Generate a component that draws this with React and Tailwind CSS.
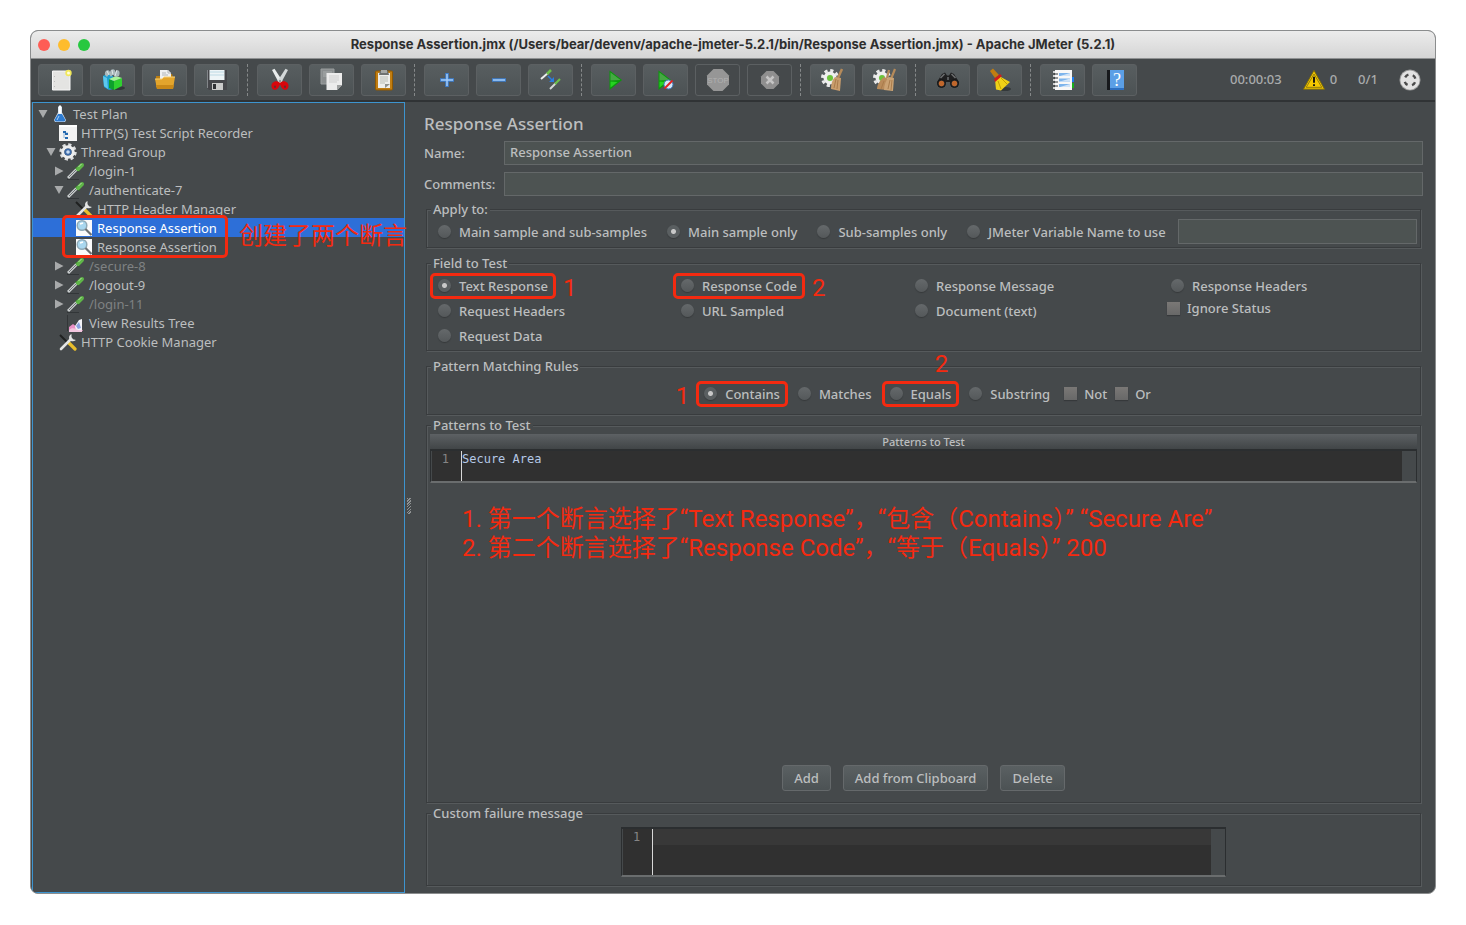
// App.jsx - JMeter main window with the Response Assertion editor open
import { useState } from 'react';
import clsx from 'clsx';

/* ---------- Toolbar icons ---------- */

function Icon({ size = 24, children }) {
  return (
    <svg width={size} height={size} viewBox="0 0 24 24" fill="none" aria-hidden="true" className="shrink-0">
      {children}
    </svg>
  );
}

const NewIcon = () => (
  <Icon>
    <path d="M3.500 3h17.500v19h-17.500z" fill="#e4e4e2" stroke="#f7f7f7" />
    <path d="M5.500 8v1M5.500 13v1M5.500 18v1" stroke="#bdbdbd" />
    <circle cx="19.500" cy="5" r="3.200" fill="#f1e85a" />
    <circle cx="19.500" cy="5" r="1.500" fill="#fffde0" />
  </Icon>
);

const TemplatesIcon = () => (
  <Icon>
    <ellipse cx="17" cy="20" rx="7" ry="2" fill="#33383a" />
    <path d="M2 8l5-3 5 3v13l-4 1-5-3z" fill="#1d9fd0" />
    <path d="M2 8l4 2 1 11-4-3z" fill="#5cc8ee" />
    <path d="M8 11l5 2v9l-5-2z" fill="#0ea02c" />
    <path d="M13 13l8-3v8l-8 4z" fill="#2fd030" />
    <path d="M8 11l7-3 6 2-8 3z" fill="#a6f59a" />
    <path d="M4 7c-1-5 4-6 5-3 1-4 6-3 5 0 3-3 6-1 4 4l-4 1-2-3-2 3-2-3-2 3z" fill="#a9b7ba" />
    <path d="M6 3l2 4M11 2l1 5M16 2l-2 6" stroke="#dfe7e8" />
  </Icon>
);

const OpenIcon = () => (
  <Icon>
    <path d="M3 8h6l1-2h9l1 3v10H3z" fill="#b97d12" />
    <path d="M7 2h8l3 3v8H7z" fill="#eef0f0" />
    <path d="M15 2v3h3M9 5h4M9 7h6" stroke="#b3b6b7" />
    <path d="M2 11h7l2-2h11l-2 12H4z" fill="#e3a52c" />
    <path d="M2 11h7l2-2h11" stroke="#f8d277" />
    <path d="M4 21h16l1-4H3z" fill="#c98918" />
  </Icon>
);

const SaveIcon = () => (
  <Icon>
    <path d="M2 2h20v20H4l-2-2z" fill="#45464a" />
    <path d="M4.500 2h15v10h-15z" fill="#eef5f7" />
    <path d="M5 4h14M5 7h14" stroke="#bcd9e4" />
    <path d="M7 15h11v7H7z" fill="#c9c9c9" />
    <path d="M8 16h3v5H8z" fill="#303134" />
    <path d="M2.500 2v18" stroke="#83868a" />
  </Icon>
);

const CutIcon = () => (
  <Icon>
    <path d="M4 2l2.500-1.200L14.500 13l-3 3z" fill="#e9ecec" />
    <path d="M20 2l-2.500-1.200L9.500 13l3 3z" fill="#d3d8d9" />
    <circle cx="12" cy="13" r="1" fill="#7d8283" />
    <path d="M11 14c-4-2-8 1-7.500 4.500.5 4 5 4.500 7 1L12 16.500l1.500 3c2 3.500 6.500 3 7-1 .5-3.500-3.500-6.500-7.500-4.500l-1 1z" fill="#d8060c" />
    <ellipse cx="7" cy="18.800" rx="1.100" ry="1.300" fill="#6a2a2c" />
    <ellipse cx="17" cy="18.800" rx="1.100" ry="1.300" fill="#6a2a2c" />
  </Icon>
);

const CopyIcon = () => (
  <Icon>
    <path d="M1 1h13v15H1z" fill="#8a8e8f" stroke="#9a9e9f" />
    <path d="M3 4h9M3 6h9M3 8h9" stroke="#a9adad" />
    <path d="M6.500 5h15.500v12l-5 5H6.500z" fill="#ececec" />
    <path d="M9 8h10M9 10h10M9 12h10M9 14h8" stroke="#cfcfcf" />
    <path d="M17 22v-5h5z" fill="#9fa1a1" />
  </Icon>
);

const PasteIcon = () => (
  <Icon>
    <rect x="3.500" y="3" width="17" height="19" rx="1" fill="#c17d11" stroke="#8f5902" />
    <path d="M6 5h12v15H6z" fill="#eeeeec" />
    <path d="M8 3h8l1 4H7z" fill="#6f7271" />
    <path d="M9 2h6v3H9z" fill="#a6a8a6" />
    <path d="M8 9h8M8 11h8M8 13h8M8 15h5" stroke="#babdb6" />
    <path d="M13 20v-4h5z" fill="#8f918e" />
  </Icon>
);

const PlusIcon = () => (
  <Icon>
    <path d="M12 5v14M5 12h14" stroke="#3d7fd0" strokeWidth="3.500" />
    <path d="M12 6v12M6 12h12" stroke="#a4cdf8" strokeWidth="1.500" />
  </Icon>
);

const MinusIcon = () => (
  <Icon>
    <path d="M5 12h14" stroke="#3d7fd0" strokeWidth="3.500" />
    <path d="M6 12h12" stroke="#a4cdf8" strokeWidth="1.500" />
  </Icon>
);

const ToggleIcon = () => (
  <Icon>
    <path d="M2 11l7-6" stroke="#eceeee" strokeWidth="2" />
    <path d="M8 6l4-4" stroke="#6cc04a" strokeWidth="2.500" />
    <path d="M11 21l6-6" stroke="#d5d8d8" strokeWidth="2" />
    <path d="M16 16l5-5" stroke="#6cc04a" strokeWidth="2.200" />
    <path d="M9 8l4 4" stroke="#2a7de0" strokeWidth="1.500" />
    <path d="M15 9v5h-5z" fill="#2a7de0" />
  </Icon>
);

const StartIcon = () => (
  <Icon>
    <path d="M7.500 2.500v19.500L20 12z" fill="#0a9a0a" />
    <path d="M8.500 4.500v8l10-.500z" fill="#46a844" />
    <path d="M8.500 19.500v-6l7 .500z" fill="#25d321" />
  </Icon>
);

const StartNoPauseIcon = () => (
  <Icon>
    <path d="M4.500 2.500v19.500L17 12z" fill="#0a9a0a" />
    <path d="M5.500 4.500v8l10-.500z" fill="#46a844" />
    <path d="M5.500 19.500v-6l7 .500z" fill="#25d321" />
    <circle cx="14.500" cy="16.500" r="4.500" fill="#d5e6f7" stroke="#3c78bd" />
    <path d="M10.500 20.500l8-8" stroke="#e02222" strokeWidth="2" />
  </Icon>
);

const StopIcon = () => (
  <Icon>
    <path d="M7.500 1h9L23 7.500v9L16.500 23h-9L1 16.500v-9z" fill="#969696" />
    <text x="12" y="15" textAnchor="middle" fill="#b0b0b0" fontSize="8" fontFamily="Liberation Sans">STOP</text>
  </Icon>
);

const ShutdownIcon = () => (
  <Icon>
    <path d="M8.500 3h7L21 8.500v7L15.500 21h-7L3 15.500v-7z" fill="#8f8f8f" />
    <path d="M8.500 8.500l7 7M15.500 8.500l-7 7" stroke="#c4c4c4" strokeWidth="2.500" />
  </Icon>
);

const Gear = () => (
  <>
    <circle cx="9" cy="10" r="7.500" stroke="#e9e9e9" strokeWidth="3" strokeDasharray="3.200 2.690" />
    <circle cx="9" cy="10" r="5" fill="#e4e4e4" stroke="#efefef" strokeWidth="3" />
    <circle cx="9" cy="10" r="3" fill="#6cc33a" />
  </>
);

const ClearIcon = () => (
  <Icon>
    <Gear />
    <path d="M21 1l-4 9" stroke="#b58a5a" strokeWidth="2.500" />
    <path d="M14 9l6 1-1 13-9-2c0-5 1-9 4-12z" fill="#c99d6c" />
    <path d="M15 11l-2 9M17 12l-1 9" stroke="#a97c4c" />
  </Icon>
);

const ClearAllIcon = () => (
  <Icon>
    <Gear />
    <path d="M16 2l-2 8M22 1l-4 10" stroke="#b58a5a" strokeWidth="2.200" />
    <path d="M11 9l5 2-2 11-10-1c0-4 3-9 7-12z" fill="#b98b5a" />
    <path d="M16 9l5 1-1 13-9-1c0-5 2-10 5-13z" fill="#cba374" />
    <path d="M11 13l-3 8M17 12l-2 9M19 12l-1 10" stroke="#a97c4c" />
  </Icon>
);

const SearchIcon = () => (
  <Icon>
    <path d="M6 6l3-1.500 2 3h2l2-3 3 1.500 5 8-2 5h-4l-3-5h-4l-3 5H3l-2-5z" fill="#1f1f20" />
    <path d="M4.500 10l4-4M19.500 10l-4-4M12 9v3" stroke="#6d6f70" strokeWidth="1.500" />
    <circle cx="5.500" cy="15.500" r="4" fill="#2c2c2c" stroke="#151515" />
    <circle cx="18.500" cy="15.500" r="4" fill="#2c2c2c" stroke="#151515" />
    <circle cx="5.500" cy="15.500" r="2.700" fill="#c0672c" />
    <circle cx="18.500" cy="15.500" r="2.700" fill="#c0672c" />
  </Icon>
);

const SearchResetIcon = () => (
  <Icon>
    <ellipse cx="17" cy="21" rx="6" ry="2" fill="#33383a" />
    <path d="M2 3l3-2.500L11 7l-4 3z" fill="#c17d11" />
    <path d="M11 8l11 6-9 8.500-5-1-1-10z" fill="#efd117" />
    <path d="M6 11l6-5 2 2-7 6z" fill="#cf1d1d" />
    <path d="M10 13l3 8M13 10l6 6" stroke="#c4a000" />
  </Icon>
);

const FunctionHelperIcon = () => (
  <Icon>
    <path d="M20 9h3v5h-3z" fill="#1b7cf0" />
    <path d="M20 15h3v5h-3z" fill="#16b01b" />
    <path d="M4 2h17v20H4z" fill="#f7f7f7" />
    <path d="M8 5h11v3H8zM8 10.500h11v3H8zM8 16h11v3H8z" fill="#7db4ec" />
    <path d="M9 8l10-3v3zM9 13.500l10-3v3zM9 19l10-3v3z" fill="#cfe3f8" />
    <path d="M2 4h5M2 8h5M2 12h5M2 16h5M2 20h5" stroke="#fafafa" strokeWidth="1.500" />
    <path d="M3 6h4M3 10h4M3 14h4M3 18h4" stroke="#333638" />
  </Icon>
);

const HelpIcon = () => (
  <Icon>
    <path d="M4 2h3v20H4z" fill="#17191c" />
    <path d="M7 2h14v20H7z" fill="#5b9fe6" />
    <path d="M7 20h14v2H7z" fill="#2d6fc0" />
    <text x="14" y="18" textAnchor="middle" fill="#ffffff" fontSize="18" fontFamily="Liberation Serif">?</text>
  </Icon>
);

const WarningIcon = () => (
  <Icon size={22}>
    <path d="M12 1.500L23.500 22H.500z" fill="#f5c800" stroke="#7c6a08" />
    <path d="M12 5.500L20.500 20h-17z" stroke="#8a7510" strokeWidth="1" />
    <path d="M12 8.500v6.500M12 16.500v2" stroke="#1c1a10" strokeWidth="2.200" />
  </Icon>
);

const RemoteIcon = () => (
  <Icon size={22}>
    <circle cx="12" cy="12" r="11.500" fill="#9c9c9c" />
    <circle cx="12" cy="12" r="10.500" fill="#e2e2e2" />
    <circle cx="12" cy="12" r="6" stroke="#4b4b4b" strokeWidth="2.600" strokeDasharray="4.400 5.025" strokeDashoffset="-2.500" />
  </Icon>
);

/* ---------- Tree icons ---------- */

function TreeSvg({ children }) {
  return (
    <svg width="18" height="18" viewBox="0 0 18 18" fill="none" aria-hidden="true" className="shrink-0">
      {children}
    </svg>
  );
}

const FlaskIcon = () => (
  <TreeSvg>
    <path d="M7 1.500h4v6l4 7.500-1 2H4l-1-2 4-7.500z" fill="#dfe9f2" />
    <path d="M7 9h4l3.500 6-1 1.500h-9L3.500 15z" fill="#2e7bd0" />
    <path d="M9 .500v8" stroke="#ffffff" strokeWidth="2" />
    <path d="M8 11l-2 4" stroke="#a8d2f7" />
  </TreeSvg>
);

const RecorderIcon = () => (
  <TreeSvg>
    <path d="M0 1h18v16H0z" fill="#f3f3f3" />
    <path d="M0 1h18v2H0z" fill="#ffffff" />
    <path d="M5 8v6M6 9h3M6 14h3" stroke="#8ab4dc" />
    <path d="M4 7h3v2H4zM6 9h3v2H6zM6 13h3v2H6z" fill="#2469b0" />
  </TreeSvg>
);

const GearIcon = () => (
  <TreeSvg>
    <circle cx="9" cy="9" r="7.200" stroke="#dcdedf" strokeWidth="3" strokeDasharray="3.100 2.550" />
    <circle cx="9" cy="9" r="5.200" stroke="#eceded" strokeWidth="3.200" />
    <circle cx="9" cy="9" r="3.600" fill="#3c6aa8" />
    <circle cx="9" cy="9" r="1.800" fill="#c7dcf3" />
  </TreeSvg>
);

const DropperIcon = () => (
  <TreeSvg>
    <path d="M0 17.500h12" stroke="#323638" />
    <path d="M1 16l9-9" stroke="#c9cdce" strokeWidth="3" />
    <path d="M2 15l8-8" stroke="#6d7274" />
    <path d="M8.500 5.500l4 4" stroke="#2f6b25" strokeWidth="1.500" />
    <path d="M11 7l4-4" stroke="#5fb648" strokeWidth="4" strokeLinecap="round" />
    <path d="M11.500 5l3-3" stroke="#b6e5a4" />
  </TreeSvg>
);

const ToolsIcon = () => (
  <TreeSvg>
    <path d="M1 2l9 9" stroke="#1f2020" strokeWidth="2" />
    <path d="M10 10l6 6" stroke="#e8be2c" strokeWidth="3.200" strokeLinecap="round" />
    <path d="M2 16L12 6" stroke="#e3e4e4" strokeWidth="2.600" strokeLinecap="round" />
    <path d="M12.500 1c-2.500 1-3 3.500-2 5.500s4 2.500 6.500.500l-3-.800-1.500-2z" fill="#e3e4e4" />
  </TreeSvg>
);

const AssertionIcon = () => (
  <TreeSvg>
    <path d="M1 1h16v16H1z" fill="#fbfbfb" />
    <circle cx="7" cy="6.500" r="4.800" fill="#a9d7ef" stroke="#8fa9b6" strokeWidth="1.500" />
    <path d="M5 5l3-1" stroke="#ffffff" strokeWidth="1.500" />
    <path d="M10.500 10l6 6" stroke="#6b7073" strokeWidth="2.200" />
  </TreeSvg>
);

const ResultsIcon = () => (
  <TreeSvg>
    <path d="M.500 1v16" stroke="#333638" />
    <path d="M2 17v-4l4-3 4 3 4 1 2 3z" fill="#e98fc4" />
    <path d="M8 12l4-6 3-1v12H9z" fill="#f4f4f8" />
    <path d="M9 12l3-4 2 6-3 1z" fill="#8aa0dd" />
    <path d="M2 16c5-5 8 2 13 0v2H2z" fill="#f3c6df" />
  </TreeSvg>
);

/* ---------- Data ---------- */

const toolbarGroups = [
  [
    { label: 'New', icon: NewIcon },
    { label: 'Templates', icon: TemplatesIcon },
    { label: 'Open', icon: OpenIcon },
    { label: 'Save', icon: SaveIcon },
  ],
  [
    { label: 'Cut', icon: CutIcon },
    { label: 'Copy', icon: CopyIcon },
    { label: 'Paste', icon: PasteIcon },
  ],
  [
    { label: 'Expand All', icon: PlusIcon },
    { label: 'Collapse All', icon: MinusIcon },
    { label: 'Toggle', icon: ToggleIcon },
  ],
  [
    { label: 'Start', icon: StartIcon },
    { label: 'Start no pauses', icon: StartNoPauseIcon },
    { label: 'Stop', icon: StopIcon, disabled: true },
    { label: 'Shutdown', icon: ShutdownIcon, disabled: true },
  ],
  [
    { label: 'Clear', icon: ClearIcon },
    { label: 'Clear All', icon: ClearAllIcon },
  ],
  [
    { label: 'Search', icon: SearchIcon },
    { label: 'Reset Search', icon: SearchResetIcon },
  ],
  [
    { label: 'Function Helper', icon: FunctionHelperIcon },
    { label: 'Help', icon: HelpIcon },
  ],
];

const treeNodes = [
  { label: 'Test Plan', level: 0, icon: FlaskIcon, arrow: 'open' },
  { label: 'HTTP(S) Test Script Recorder', level: 1, icon: RecorderIcon },
  { label: 'Thread Group', level: 1, icon: GearIcon, arrow: 'open' },
  { label: '/login-1', level: 2, icon: DropperIcon, arrow: 'closed' },
  { label: '/authenticate-7', level: 2, icon: DropperIcon, arrow: 'open' },
  { label: 'HTTP Header Manager', level: 3, icon: ToolsIcon },
  { label: 'Response Assertion', level: 3, icon: AssertionIcon, selected: true, note: '创建了两个断言' },
  { label: 'Response Assertion', level: 3, icon: AssertionIcon },
  { label: '/secure-8', level: 2, icon: DropperIcon, arrow: 'closed', disabled: true },
  { label: '/logout-9', level: 2, icon: DropperIcon, arrow: 'closed' },
  { label: '/login-11', level: 2, icon: DropperIcon, arrow: 'closed', disabled: true },
  { label: 'View Results Tree', level: 2, icon: ResultsIcon },
  { label: 'HTTP Cookie Manager', level: 1, icon: ToolsIcon },
];

const levelPadding = ['pl-[5px]', 'pl-[13px]', 'pl-[21px]', 'pl-[29px]'];

const noteFont = "font-['Roboto','Noto_Sans_CJK_SC',sans-serif] text-2xl font-normal text-[#f42a10]";

/* ---------- Shared pieces ---------- */

// Etched border: dark line with a lighter one on its lower right side
function Group({ title, className, children }) {
  return (
    <fieldset
      className={clsx(
        'mx-[2px] min-w-0 border border-[#393c3e] px-px pb-px shadow-[1px_1px_#565a5c,inset_1px_1px_#565a5c]',
        className
      )}
    >
      <legend className="ml-[3px] bg-[#45494b] px-[2px] leading-4">{title}</legend>
      {children}
    </fieldset>
  );
}

// Red frame with an optional number, drawn over the control it belongs to
function Mark({ number, className }) {
  return (
    <span className="pointer-events-none absolute -inset-x-2 -inset-y-[5px] rounded-[5px] border-3 border-[#f42a10]">
      {number && <span className={clsx('absolute leading-6', noteFont, className)}>{number}</span>}
    </span>
  );
}

function Radio({ name, label, checked, onChange, mark }) {
  return (
    <label className="relative flex w-fit items-center gap-2 leading-4 whitespace-nowrap">
      <input
        type="radio"
        name={name}
        checked={checked}
        onChange={onChange}
        className="size-[13px] shrink-0 appearance-none rounded-full bg-linear-to-b from-[#65696b] to-[#54585a] shadow-[0_1px_1px_#36393b] checked:bg-[radial-gradient(circle,#c8c8c8_0,#c8c8c8_2px,#5a5f61_3px)]"
      />
      {label}
      {mark}
    </label>
  );
}

function Checkbox({ label }) {
  return (
    <label className="flex w-fit items-center gap-[7px] leading-4 whitespace-nowrap">
      <input
        type="checkbox"
        className="size-[13px] shrink-0 appearance-none bg-linear-to-b from-[#7a7876] to-[#686868] shadow-[0_1px_1px_#36393b] checked:bg-[#4a88c7]"
      />
      {label}
    </label>
  );
}

function TextField({ className, ...props }) {
  return (
    <input
      type="text"
      className={clsx('min-w-0 flex-1 border border-[#646869] bg-[#4d5352] px-[5px] outline-none', className)}
      {...props}
    />
  );
}

function CodeEditor({ label, defaultValue, className, lineClass }) {
  return (
    <div className={clsx("flex border border-t-2 border-b-2 border-[#2b2e30] border-b-[#6a6d6e] bg-[#303030] font-['DejaVu_Sans_Mono',monospace] text-xs leading-4 font-normal", className)}>
      <div className="w-[30px] shrink-0 border-l border-[#45494b] pr-3 text-right text-[#858585]">1</div>
      <textarea
        aria-label={label}
        defaultValue={defaultValue}
        className={clsx('block min-w-0 flex-1 resize-none overflow-hidden border-l border-[#d8d8d8] text-[#b5c8e6] outline-none', lineClass)}
      />
      <div className="w-[14px] shrink-0 bg-[#45494b]" />
    </div>
  );
}

function PushButton({ children }) {
  return (
    <button
      type="button"
      className="h-[26px] rounded-[3px] border border-[#65696b] bg-linear-to-b from-[#5a6062] to-[#4c5254] px-[11px] leading-4"
    >
      {children}
    </button>
  );
}

/* ---------- Window parts ---------- */

function TitleBar() {
  return (
    <header className="relative flex h-7 items-center justify-center border-b border-[#8f9192] bg-linear-to-b from-[#ececec] to-[#d5d5d5]">
      <div className="absolute left-[7px] flex gap-2">
        <span className="size-3 rounded-full bg-[#fe5d55]" />
        <span className="size-3 rounded-full bg-[#febc2d]" />
        <span className="size-3 rounded-full bg-[#27c840]" />
      </div>
      <h1 className="font-['Inter',sans-serif] text-[13px] font-bold whitespace-nowrap text-[#2e2e2e]">
        Response Assertion.jmx (/Users/bear/devenv/apache-jmeter-5.2.1/bin/Response Assertion.jmx) - Apache JMeter (5.2.1)
      </h1>
    </header>
  );
}

function Toolbar() {
  return (
    <div className="flex h-[43px] items-center border-b-2 border-[#303335] pr-[14px] pl-[7px]">
      {toolbarGroups.map((group, index) => (
        <div key={index} className="flex items-center">
          {index > 0 && <span className="mx-2 h-8 w-[2px] border-l border-dashed border-[#858889]" />}
          <div className="flex gap-[7px]">
            {group.map(({ label, icon: ToolIcon, disabled }) => (
              <button
                key={label}
                type="button"
                aria-label={label}
                disabled={disabled}
                className="flex h-8 w-[45px] items-center justify-center rounded-[3px] border border-[#5c6062] bg-linear-to-b from-[#585e60] to-[#4c5254] disabled:bg-none"
              >
                <ToolIcon />
              </button>
            ))}
          </div>
        </div>
      ))}
      <div className="ml-auto flex items-center gap-[21px] text-[#a9abac]">
        <span>00:00:03</span>
        <span className="flex items-center gap-[5px]">
          <WarningIcon />0
        </span>
        <span>0/1</span>
        <RemoteIcon />
      </div>
    </div>
  );
}

function Arrow({ state }) {
  return (
    <svg width="10" height="10" viewBox="0 0 10 10" aria-hidden="true" className="mr-[3px] shrink-0">
      {state === 'open' && <path d="M.500 1h9L5 9z" fill="#a8aaab" />}
      {state === 'closed' && <path d="M1 .500v9L9.500 5z" fill="#a8aaab" />}
    </svg>
  );
}

function Tree() {
  return (
    <aside className="relative w-[373px] shrink-0 border border-[#3d94cf] pt-px font-normal">
      <ul>
        {treeNodes.map(({ label, level, icon: NodeIcon, arrow, selected, disabled, note }, index) => (
          <li
            key={index}
            className={clsx(
              'relative flex h-[19px] items-center whitespace-nowrap',
              levelPadding[level],
              selected && 'bg-[#2d6fd8] text-white',
              disabled && 'text-[#7f8283]'
            )}
          >
            <Arrow state={arrow} />
            <NodeIcon />
            <span className="ml-1 leading-4">{label}</span>
            {note && (
              <>
                <span className="absolute -top-[3px] left-[29px] z-10 h-[43px] w-[166px] rounded-[5px] border-3 border-[#f42a10]" />
                <span className={clsx('absolute top-[6px] left-[206px] z-10 leading-6', noteFont)}>{note}</span>
              </>
            )}
          </li>
        ))}
      </ul>
    </aside>
  );
}

function AssertionPanel() {
  const [scope, setScope] = useState('Main sample only');
  const [field, setField] = useState('Text Response');
  const [rule, setRule] = useState('Contains');

  const radio = (name, label, value, setValue, mark) => (
    <Radio name={name} label={label} checked={value === label} onChange={() => setValue(label)} mark={mark} />
  );

  return (
    <main className="flex min-w-0 flex-1 flex-col pt-[10px] pr-3 pb-[7px] pl-[11px]">
      <h2 className="text-[17px] leading-6">Response Assertion</h2>
      <div className="mt-[5px] flex h-6">
        <label htmlFor="name" className="w-20 leading-6">Name:</label>
        <TextField id="name" defaultValue="Response Assertion" />
      </div>
      <div className="mt-[7px] flex h-6">
        <label htmlFor="comments" className="w-20 leading-6">Comments:</label>
        <TextField id="comments" />
      </div>

      <Group title="Apply to:" className="mt-[5px]">
        <div className="flex h-[29px] items-center gap-5 pr-[2px] pl-[10px]">
          {radio('scope', 'Main sample and sub-samples', scope, setScope)}
          {radio('scope', 'Main sample only', scope, setScope)}
          {radio('scope', 'Sub-samples only', scope, setScope)}
          <div className="flex flex-1 items-center gap-3">
            {radio('scope', 'JMeter Variable Name to use', scope, setScope)}
            <TextField aria-label="JMeter Variable Name" className="h-[25px]" />
          </div>
        </div>
      </Group>

      <Group title="Field to Test" className="mt-[7px]">
        <div className="grid auto-rows-[25px] grid-cols-[243fr_234fr_256fr_248fr] items-center pt-[2px] pb-px pl-[10px]">
          {radio('field', 'Text Response', field, setField, <Mark number="1" className="top-0 left-full ml-[10px]" />)}
          {radio('field', 'Response Code', field, setField, <Mark number="2" className="top-0 left-full ml-[10px]" />)}
          {radio('field', 'Response Message', field, setField)}
          {radio('field', 'Response Headers', field, setField)}
          {radio('field', 'Request Headers', field, setField)}
          {radio('field', 'URL Sampled', field, setField)}
          {radio('field', 'Document (text)', field, setField)}
          <div className="-ml-1 flex h-5 items-center self-start">
            <Checkbox label="Ignore Status" />
          </div>
          {radio('field', 'Request Data', field, setField)}
        </div>
      </Group>

      <Group title="Pattern Matching Rules" className="mt-[7px]">
        <div className="flex h-[39px] items-center justify-center gap-[14px] pl-2">
          <div className="flex gap-[18px]">
            {radio('rule', 'Contains', rule, setRule, <Mark number="1" className="top-0 right-full mr-[10px]" />)}
            {radio('rule', 'Matches', rule, setRule)}
            {radio('rule', 'Equals', rule, setRule, <Mark number="2" className="-top-8 right-0 mr-2" />)}
            {radio('rule', 'Substring', rule, setRule)}
          </div>
          <div className="flex gap-2">
            <Checkbox label="Not" />
            <Checkbox label="Or" />
          </div>
        </div>
      </Group>

      <Group title="Patterns to Test" className="relative mt-[2px] flex flex-1 flex-col">
        <div className="flex h-full flex-col px-[2px] pt-px pb-[10px]">
          <table className="w-full border-collapse">
            <thead>
              <tr>
                <th className="h-[15px] bg-linear-to-b from-[#5d6164] to-[#414547] p-0 text-[11px] leading-[15px] font-medium">
                  Patterns to Test
                </th>
              </tr>
            </thead>
            <tbody>
              <tr>
                <td className="p-0">
                  <CodeEditor label="Pattern 1" defaultValue="Secure Area" className="h-[34px]" />
                </td>
              </tr>
            </tbody>
          </table>
          <div className={clsx('pointer-events-none mt-[22px] ml-8 leading-[29px] whitespace-nowrap', noteFont)}>
            <p>1. 第一个断言选择了“Text Response”，“包含（Contains）” “Secure Are”</p>
            <p>2. 第二个断言选择了“Response Code”，“等于（Equals）” 200</p>
          </div>
          <div className="mt-auto flex justify-center gap-3">
            <PushButton>Add</PushButton>
            <PushButton>Add from Clipboard</PushButton>
            <PushButton>Delete</PushButton>
          </div>
        </div>
      </Group>

      <Group title="Custom failure message" className="mt-[2px]">
        <CodeEditor
          label="Custom failure message"
          className="mx-auto mt-[6px] mb-[7px] h-[50px] w-[61%]"
          lineClass="bg-linear-to-b from-[#383838] from-[16px] to-[#303030] to-[16px]"
        />
      </Group>
    </main>
  );
}

export default function App() {
  return (
    <div className="flex min-h-screen flex-col bg-white px-[30px] pt-[30px] pb-[31px] font-['Noto_Sans','Noto_Sans_CJK_SC',sans-serif] text-[13px] font-medium text-[#bcbebf]">
      <div className="flex flex-1 flex-col overflow-hidden rounded-lg border border-[#8b8d8e] bg-[#45494b]">
        <TitleBar />
        <Toolbar />
        <div className="flex flex-1 pl-px">
          <Tree />
          <div className="flex w-2 shrink-0 items-center justify-center pt-4">
            <span className="h-4 w-1 bg-[repeating-linear-gradient(135deg,#8f9293_0_1px,#45494b_1px_2px)]" />
          </div>
          <AssertionPanel />
        </div>
      </div>
    </div>
  );
}
